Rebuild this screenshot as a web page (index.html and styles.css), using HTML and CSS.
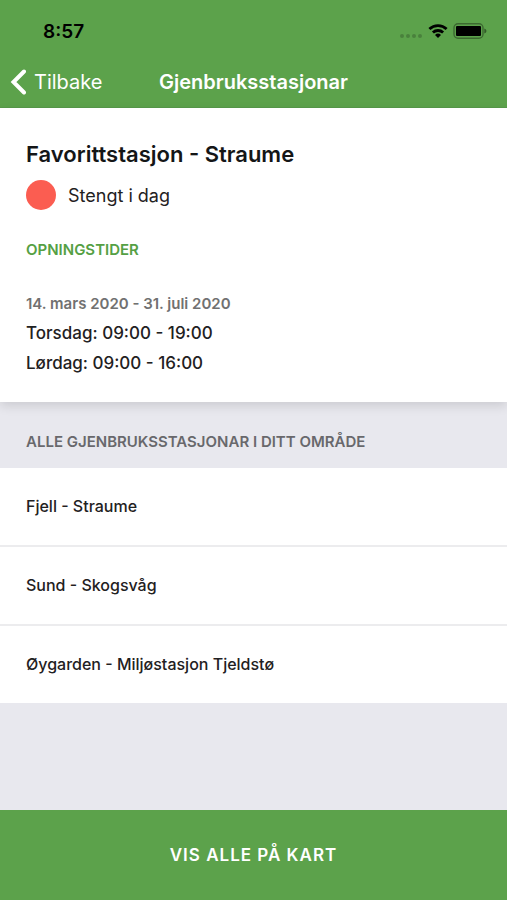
FILE: index.html
```html
<!DOCTYPE html>
<html lang="nn">
<head>
  <meta charset="UTF-8" />
  <meta name="viewport" content="width=device-width, initial-scale=1.0" />
  <title>Gjenbruksstasjonar</title>
  <link rel="stylesheet" href="styles.css">
</head>
<body>

  <header class="header">
    <div class="status-bar">
      <span class="time">8:57</span>
      <div class="status-icons">
        <svg class="dots" width="24" height="18" viewBox="0 0 24 18" aria-hidden="true">
          <circle cx="3" cy="14" r="2" /><circle cx="9" cy="14" r="2" />
          <circle cx="15" cy="14" r="2" /><circle cx="21" cy="14" r="2" />
        </svg>
        <svg width="20" height="18" viewBox="0 0 20 18" aria-hidden="true">
          <g fill="none" stroke="#000" stroke-width="2.8">
            <path d="M1.4 7.1 A12.3 12.3 0 0 1 18.6 7.1" />
            <path d="M4.9 10.6 A7.3 7.3 0 0 1 15.1 10.6" />
          </g>
          <path d="M10 16 L7 13 A4.3 4.3 0 0 1 13 13 Z" />
        </svg>
        <svg width="34" height="18" viewBox="0 0 34 18" aria-hidden="true">
          <rect x="1" y="1.7" width="29" height="14.6" rx="4" fill="none" stroke="#000" stroke-opacity=".35" stroke-width="1.4" />
          <rect x="3" y="4" width="25" height="10" rx="1" />
          <path d="M31.3 6.5 Q33.5 7.3 33.5 9 T31.3 11.5 Z" fill-opacity=".45" />
        </svg>
      </div>
    </div>
    <nav class="nav-bar">
      <a class="back" href="#">
        <svg width="16" height="26" viewBox="0 0 16 26" aria-hidden="true">
          <path d="M14 2.5 L3.5 13 L14 23.5" fill="none" stroke="#fff" stroke-width="4" stroke-linecap="round" />
        </svg>
        Tilbake
      </a>
      <h1>Gjenbruksstasjonar</h1>
    </nav>
  </header>

  <main>
    <!-- Favorittstasjon -->
    <section class="favorite">
      <h2>Favorittstasjon - Straume</h2>
      <div class="status"><span class="status-dot"></span>Stengt i dag</div>
      <h3 class="hours-title">OPNINGSTIDER</h3>
      <h4 class="period">14. mars 2020 - 31. juli 2020</h4>
      <p>Torsdag: 09:00 - 19:00</p>
      <p>Lørdag: 09:00 - 16:00</p>
    </section>

    <!-- Alle stasjonar -->
    <h3 class="list-title">ALLE GJENBRUKSSTASJONAR I DITT OMRÅDE</h3>
    <ul class="stations">
      <li><a href="#">Fjell - Straume</a></li>
      <li><a href="#">Sund - Skogsvåg</a></li>
      <li><a href="#">Øygarden - Miljøstasjon Tjeldstø</a></li>
    </ul>
  </main>

  <button class="map-btn" type="button">VIS ALLE PÅ KART</button>

</body>
</html>
```

FILE: styles.css
```css
* { margin: 0; padding: 0; box-sizing: border-box; }
body {
  min-height: 100vh;
  display: flex;
  flex-direction: column;
  font-family: Inter, "Liberation Sans", sans-serif;
  background: #e8e8ee;
  color: #1f2122;
}
.header {
  background: #5ca24b;
  padding-bottom: 4px;
  border-bottom: 1px solid #57994a;
}
.status-bar {
  display: flex;
  justify-content: space-between;
  align-items: center;
  height: 60px;
  padding: 2px 20px 0 43px;
}
.time {
  font-size: 19px;
  font-weight: 600;
  color: #000;
}
.status-icons {
  display: flex;
  align-items: center;
  gap: 5px;
}
.dots {
  fill: #000;
  fill-opacity: .2;
}
.nav-bar {
  display: grid;
  grid-template-columns: 1fr auto 1fr;
  align-items: center;
  height: 43px;
  padding: 0 10px;
  color: #fff;
}
.back {
  display: flex;
  align-items: center;
  gap: 8px;
  font-size: 20px;
  color: #fff;
  text-decoration: none;
}
h1 {
  font-size: 20px;
  font-weight: 600;
}
main { flex: 1; }
.favorite {
  padding: 32px 26px 24px;
  background: #fff;
  box-shadow: 0 4px 10px rgba(0, 0, 0, .12);
}
h2 {
  font-size: 22px;
  line-height: 28px;
  font-weight: 600;
  color: #141617;
}
.status {
  display: flex;
  align-items: center;
  gap: 12px;
  margin-top: 12px;
  font-size: 18px;
}
.status-dot {
  width: 30px;
  height: 30px;
  border-radius: 50%;
  background: #fb5d51;
}
.hours-title, .period, .list-title {
  font-size: 15px;
  line-height: 20px;
  font-weight: 600;
}
.hours-title {
  margin-top: 30px;
  color: #55a044;
}
.period {
  margin: 34px 0 4px;
  color: #717171;
}
.favorite p {
  font-size: 17px;
  line-height: 30px;
  font-weight: 500;
}
.list-title {
  padding: 30px 26px 16px;
  color: #68686c;
}
.stations {
  list-style: none;
  background: #fff;
}
.stations li + li { border-top: 2px solid #ececee; }
.stations a {
  display: block;
  padding: 28px 26px;
  font-size: 16px;
  line-height: 21px;
  font-weight: 500;
  color: #1f2122;
  text-decoration: none;
}
.map-btn {
  height: 90px;
  border: none;
  background: #5ca24b;
  color: #fff;
  font-family: inherit;
  font-size: 17px;
  font-weight: 600;
  letter-spacing: 1px;
  cursor: pointer;
}
```
